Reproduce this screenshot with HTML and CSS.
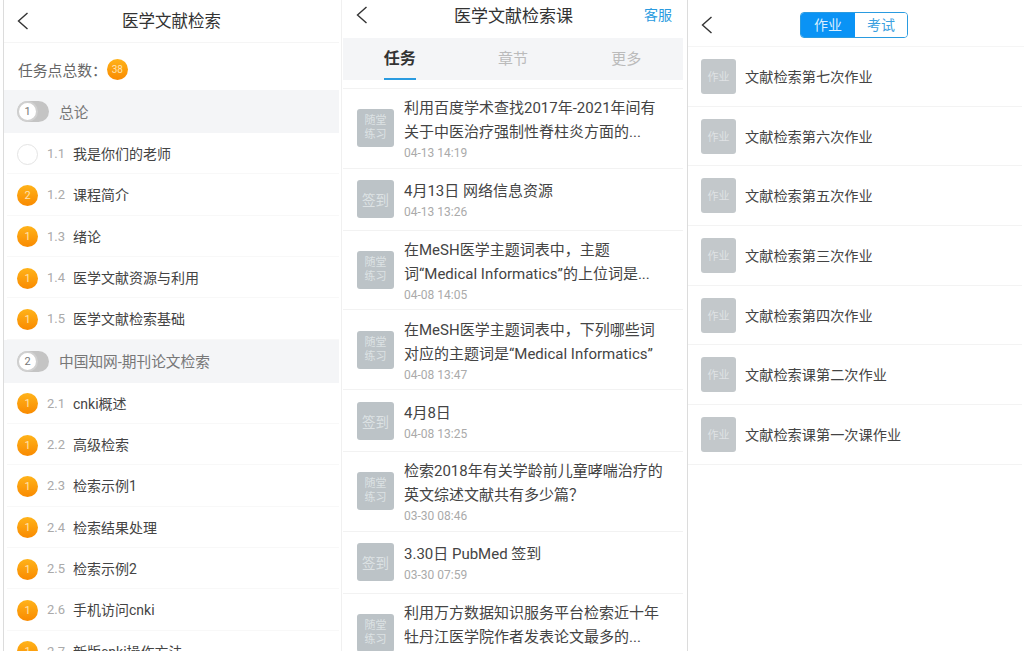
FILE: index.html
```html
<!DOCTYPE html>
<html lang="zh">
<head>
<meta charset="utf-8">
<title>医学文献检索</title>
<link rel="stylesheet" href="styles.css">
</head>
<body>
<div class="screen">
  <section class="panel p1">
    <header class="h1">
      <svg class="back" width="12" height="18" viewBox="0 0 12 18"><path d="M10.5 1 1.5 9l9 8" fill="none" stroke="#333" stroke-width="1.4"/></svg>
      <span class="h1-title">医学文献检索</span>
    </header>
    <div class="total">任务点总数：<span class="dot small">38</span></div>
    <div class="chapter"><span class="toggle"><span class="knob">1</span></span>总论</div>
    <div class="row"><span class="dot empty"></span><span class="num">1.1</span>我是你们的老师</div>
    <div class="row"><span class="dot">2</span><span class="num">1.2</span>课程简介</div>
    <div class="row"><span class="dot">1</span><span class="num">1.3</span>绪论</div>
    <div class="row"><span class="dot">1</span><span class="num">1.4</span>医学文献资源与利用</div>
    <div class="row"><span class="dot">1</span><span class="num">1.5</span>医学文献检索基础</div>
    <div class="chapter"><span class="toggle"><span class="knob">2</span></span>中国知网-期刊论文检索</div>
    <div class="row"><span class="dot">1</span><span class="num">2.1</span>cnki概述</div>
    <div class="row"><span class="dot">1</span><span class="num">2.2</span>高级检索</div>
    <div class="row"><span class="dot">1</span><span class="num">2.3</span>检索示例1</div>
    <div class="row"><span class="dot">1</span><span class="num">2.4</span>检索结果处理</div>
    <div class="row"><span class="dot">1</span><span class="num">2.5</span>检索示例2</div>
    <div class="row"><span class="dot">1</span><span class="num">2.6</span>手机访问cnki</div>
    <div class="row"><span class="dot">1</span><span class="num">2.7</span>新版cnki操作方法</div>
  </section>

  <section class="panel p2">
    <header class="h2">
      <svg class="back" width="12" height="18" viewBox="0 0 12 18"><path d="M10.5 1 1.5 9l9 8" fill="none" stroke="#333" stroke-width="1.4"/></svg>
      <span class="h2-title">医学文献检索课</span>
      <span class="service">客服</span>
    </header>
    <nav class="tabs">
      <span class="tab active">任务</span><span class="tab">章节</span><span class="tab">更多</span>
    </nav>
    <div class="task tall"><span class="badge two">随堂<br>练习</span><div class="tx"><p>利用百度学术查找2017年-2021年间有<br>关于中医治疗强制性脊柱炎方面的...</p><time>04-13 14:19</time></div></div>
    <div class="task"><span class="badge">签到</span><div class="tx"><p>4月13日 网络信息资源</p><time>04-13 13:26</time></div></div>
    <div class="task tall"><span class="badge two">随堂<br>练习</span><div class="tx"><p>在MeSH医学主题词表中，主题<br>词“Medical Informatics”的上位词是...</p><time>04-08 14:05</time></div></div>
    <div class="task tall"><span class="badge two">随堂<br>练习</span><div class="tx"><p>在MeSH医学主题词表中，下列哪些词<br>对应的主题词是“Medical Informatics”</p><time>04-08 13:47</time></div></div>
    <div class="task"><span class="badge">签到</span><div class="tx"><p>4月8日</p><time>04-08 13:25</time></div></div>
    <div class="task tall"><span class="badge two">随堂<br>练习</span><div class="tx"><p>检索2018年有关学龄前儿童哮喘治疗的<br>英文综述文献共有多少篇？</p><time>03-30 08:46</time></div></div>
    <div class="task"><span class="badge">签到</span><div class="tx"><p>3.30日 PubMed 签到</p><time>03-30 07:59</time></div></div>
    <div class="task tall"><span class="badge two">随堂<br>练习</span><div class="tx"><p>利用万方数据知识服务平台检索近十年<br>牡丹江医学院作者发表论文最多的...</p><time>03-28 10:12</time></div></div>
  </section>

  <section class="panel p3">
    <header class="h3">
      <svg class="back" width="12" height="18" viewBox="0 0 12 18"><path d="M10.5 1 1.5 9l9 8" fill="none" stroke="#333" stroke-width="1.4"/></svg>
      <div class="seg"><span class="seg-on">作业</span><span class="seg-off">考试</span></div>
    </header>
    <div class="work"><span class="wb">作业</span><span class="wt">文献检索第七次作业</span></div>
    <div class="work"><span class="wb">作业</span><span class="wt">文献检索第六次作业</span></div>
    <div class="work"><span class="wb">作业</span><span class="wt">文献检索第五次作业</span></div>
    <div class="work"><span class="wb">作业</span><span class="wt">文献检索第三次作业</span></div>
    <div class="work"><span class="wb">作业</span><span class="wt">文献检索第四次作业</span></div>
    <div class="work"><span class="wb">作业</span><span class="wt">文献检索课第二次作业</span></div>
    <div class="work"><span class="wb">作业</span><span class="wt">文献检索课第一次课作业</span></div>
  </section>
</div>
</body>
</html>
```
FILE: styles.css
```css
* { box-sizing: border-box; }
html, body { margin: 0; height: 100%; background: #fff; overflow: hidden; }
body {
  font-family: Roboto, "Noto Sans CJK SC", sans-serif;
  color: #3a3a3a;
}
p { margin: 0; }
.screen { display: flex; height: 653px; overflow: hidden; padding-left: 3px; }
.panel { height: 651px; overflow: hidden; background: #fff; flex: none; }
.p1 { width: 339px; padding-right: 2px; border-left: 1px solid #dcdcdc; border-right: 1px solid #f0f0f0; }
.p2 { width: 345px; padding: 0 4px 0 1px; }
.p3 { width: 337px; border-left: 1px solid #dcdcdc; }

.back { display: block; flex: none; }

/* panel 1 */
.h1 { height: 43px; position: relative; display: flex; align-items: center; padding-left: 13px; border-bottom: 1px solid #f5f5f5; }
.h1 .back { margin-top: -1px; }
.h1-title { position: absolute; left: 118px; top: 11px; font-size: 16.5px; line-height: 22px; color: #333; }
.total { height: 47px; display: flex; align-items: center; padding: 5px 0 0 14px; font-size: 14.8px; color: #666; }
.dot {
  width: 21px; height: 21px; border-radius: 50%; flex: none;
  display: inline-flex; align-items: center; justify-content: center;
  background: linear-gradient(180deg, #ffb31a, #f98a00);
  color: #ffe3b0; font-size: 11px; line-height: 21px;
}
.dot.small { font-size: 10px; }
.dot.empty { background: #fff; border: 1px solid #e4e4e4; }
.chapter {
  height: 43px; background: #f4f5f7; display: flex; align-items: center;
  padding: 2px 0 0 13px; font-size: 14.7px; line-height: 20px; color: #777;
}
.toggle { width: 32px; height: 21px; border-radius: 11px; background: #c4c4c4; margin: 0 10px 2px 0; flex: none; }
.knob {
  display: flex; width: 21px; height: 21px; border-radius: 50%;
  background: #fff; border: 2px solid #d0d0d0;
  align-items: center; justify-content: center; font-size: 11px; line-height: 17px; color: #777;
}
.row {
  height: 41.33px; display: flex; align-items: center; margin-left: 3px; padding: 2px 0 0 10px;
  font-size: 14px; line-height: 20px; color: #444; border-bottom: 1px solid #f8f8f8;
}
.num { width: 26px; margin-left: 9px; font-size: 13px; color: #aaa; flex: none; }

/* panel 2 */
.h2 { height: 38px; position: relative; display: flex; align-items: center; padding-left: 13px; }
.h2 .back { margin-top: -8px; }
.h2-title { position: absolute; left: 111px; top: 5px; font-size: 17px; line-height: 22px; color: #333; }
.service { position: absolute; right: 11px; top: 6px; font-size: 14px; line-height: 18px; color: #2a9be0; }
.tabs { height: 42px; background: #f4f5f7; display: grid; grid-template-columns: repeat(3, 1fr); margin-bottom: 8px; }
.tab { text-align: center; font-size: 15px; line-height: 42px; color: #bbb; height: 42px; }
.tab.active { color: #333; font-size: 16px; font-weight: bold; width: 32px; justify-self: center; border-bottom: 2px solid #2a9be0; }
.task { height: 62px; display: flex; align-items: center; padding-left: 14px; border-top: 1px solid #f2f2f2; }
.task.tall { height: 79.7px; }
.badge {
  width: 37px; height: 38px; border-radius: 3px; background: #bcc3c7; color: #dde2e4;
  display: flex; align-items: center; justify-content: center; text-align: center;
  font-size: 13.5px; flex: none; margin-right: 10px;
}
.badge.two { font-size: 11px; line-height: 14px; }
.tx p { font-size: 15px; line-height: 24px; color: #444; white-space: nowrap; }
.tx time { display: block; font-size: 12px; line-height: 14px; margin-top: 2px; color: #aaa; }

/* panel 3 */
.h3 { height: 47px; position: relative; display: flex; align-items: center; padding-left: 13px; border-bottom: 1px solid #f5f5f5; }
.h3 .back { margin-top: 3px; }
.seg {
  position: absolute; left: 112px; top: 12px; width: 108px; height: 26px; display: flex;
  border: 1px solid #2a9be0; border-radius: 4px; overflow: hidden; font-size: 14px; line-height: 24px; text-align: center;
}
.seg-on { flex: 0 0 54px; background: #0a93f5; color: #d8efff; }
.seg-off { flex: 1; color: #3aa0e0; background: #fff; }
.work {
  height: 59.7px; display: flex; align-items: center; padding-left: 13px; margin-right: 2px;
  border-bottom: 1px solid #f3f3f3;
  font-size: 14.2px; line-height: 20px; color: #444;
}
.wt { padding-top: 1px; }
.wb {
  width: 35px; height: 35px; border-radius: 3px; background: #c3c8cb; color: #dfe2e4;
  display: flex; align-items: center; justify-content: center; font-size: 11px; line-height: 15px; padding-top: 2px; margin-right: 9px; flex: none;
}
```
